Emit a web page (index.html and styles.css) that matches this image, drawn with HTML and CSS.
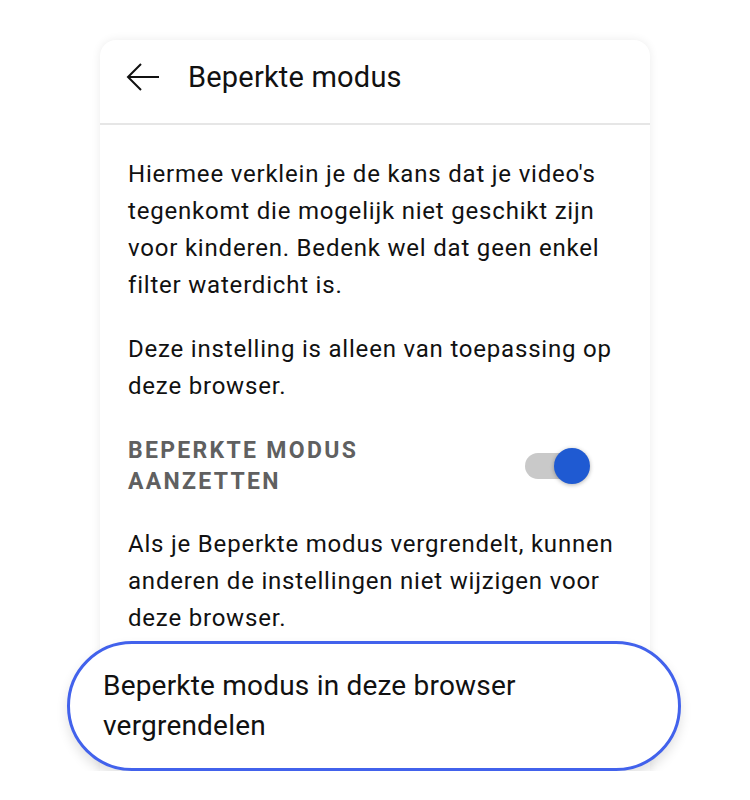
FILE: index.html
```html
<!DOCTYPE html>
<html lang="nl">
<head>
    <meta charset="UTF-8">
    <meta name="viewport" content="width=device-width, initial-scale=1.0">
    <title>Beperkte modus</title>
    <link rel="stylesheet" href="styles.css">
</head>
<body>
    <div class="panel">
        <div class="header">
            <a href="#" class="back">
                <svg width="34" height="30" viewBox="0 0 34 30">
                    <path d="M33 15H2M15 2L2 15l13 13" fill="none" stroke="#111" stroke-width="2"/>
                </svg>
            </a>
            <h1>Beperkte modus</h1>
        </div>
        <div class="content">
            <p>Hiermee verklein je de kans dat je video's tegenkomt die mogelijk niet geschikt zijn voor kinderen. Bedenk wel dat geen enkel filter waterdicht is.</p>
            <p>Deze instelling is alleen van toepassing op deze browser.</p>
            <div class="setting">
                <span class="label">Beperkte modus aanzetten</span>
                <span class="switch on"><span class="knob"></span></span>
            </div>
            <p>Als je Beperkte modus vergrendelt, kunnen anderen de instellingen niet wijzigen voor deze browser.</p>
            <!-- highlighted lock option -->
            <a href="#" class="lock">Beperkte modus in deze browser vergrendelen</a>
        </div>
    </div>
</body>
</html>
```

FILE: styles.css
```css
* {
    margin: 0;
    padding: 0;
    box-sizing: border-box;
}

body {
    background: #fff;
    color: #111;
    font-family: Roboto, "Noto Sans", sans-serif;
    padding: 40px 0 0 100px;
}

a {
    color: inherit;
    text-decoration: none;
}

.panel {
    width: 550px;
    background: #fff;
    border-radius: 16px 16px 0 0;
    box-shadow: 0 0 10px rgba(0, 0, 0, 0.08);
}

.header {
    display: flex;
    align-items: center;
    height: 85px;
    padding: 0 0 10px 26px;
    border-bottom: 2px solid #e6e6e6;
}

.back {
    display: flex;
    width: 34px;
    margin-right: 28px;
}

.header h1 {
    font-size: 29px;
    font-weight: 400;
    line-height: 1;
    letter-spacing: 0.2px;
    margin-top: 2px;
}

.content {
    padding: 31px 28px 0;
}

.content p {
    font-size: 24px;
    line-height: 37px;
    letter-spacing: 0.8px;
    margin-bottom: 27px;
}

.setting {
    display: flex;
    align-items: center;
    justify-content: space-between;
    margin: 30px 0 29px;
}

.label {
    width: 300px;
    font-size: 23px;
    font-weight: 700;
    line-height: 31px;
    text-transform: uppercase;
    letter-spacing: 2.3px;
    color: #606060;
}

.switch {
    position: relative;
    width: 56px;
    height: 26px;
    margin-right: 41px;
    border-radius: 13px;
    background: #c9c9c9;
}

.switch .knob {
    position: absolute;
    top: -5px;
    right: -9px;
    width: 36px;
    height: 36px;
    border-radius: 50%;
    background: #1f5ad2;
    box-shadow: 0 1px 4px rgba(0, 0, 0, 0.3);
}

.lock {
    display: block;
    margin: -23px 0 0 -61px;
    width: 614px;
    height: 130px;
    padding: 22px 60px 0 33px;
    border: 3px solid #4262ec;
    border-radius: 65px;
    background: #fff;
    font-size: 28px;
    line-height: 40px;
    letter-spacing: 0.2px;
    box-shadow: 0 6px 12px rgba(0, 0, 0, 0.12);
}
```
